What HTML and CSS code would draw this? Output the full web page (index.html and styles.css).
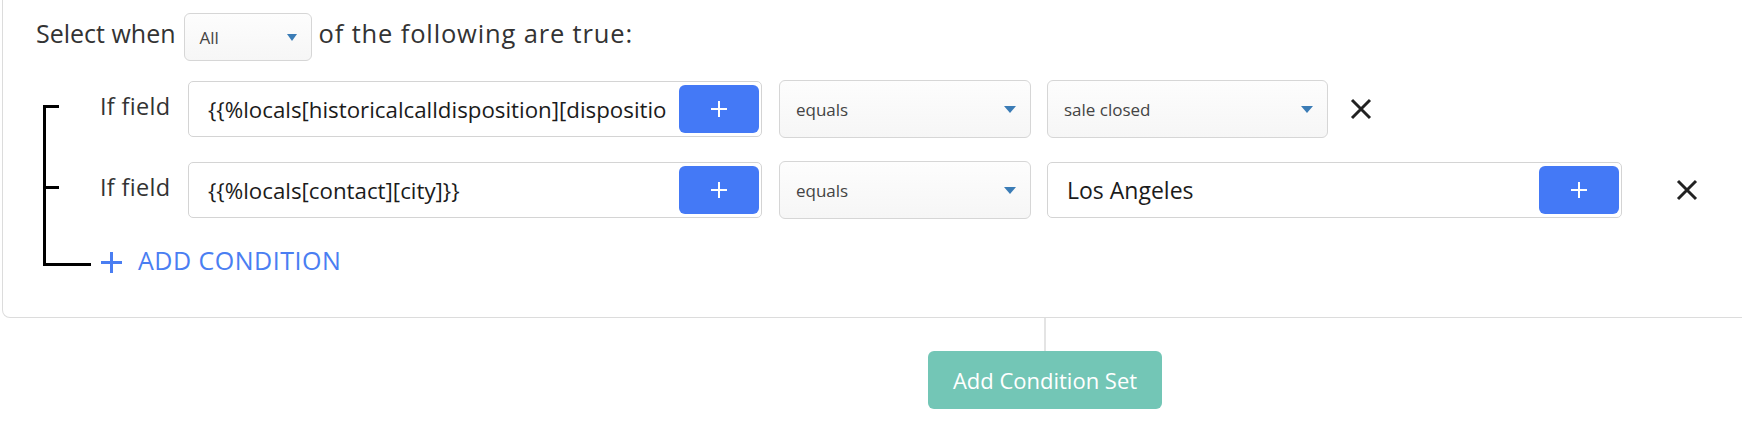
FILE: index.html
```html
<!DOCTYPE html>
<html lang="en">
<head>
<meta charset="utf-8">
<title>Condition Set</title>
<link rel="stylesheet" href="styles.css">
</head>
<body>
<div class="page">
  <section class="card">
    <div class="when">
      <span class="when-text when-lead">Select when</span>
      <div class="select select-sm"><span>All</span><i class="caret caret-sm"></i></div>
      <span class="when-text when-tail">of the following are true:</span>
    </div>

    <div class="tree">
      <div class="cond">
        <span class="cond-label">If field</span>
        <div class="field field-main">
          <span class="field-text">{{%locals[historicalcalldisposition][dispositio</span>
          <button class="add-btn" type="button">
            <svg width="18" height="18" viewBox="0 0 18 18"><path d="M9 1V17M1 9H17" stroke="#fff" stroke-width="2" fill="none"/></svg>
          </button>
        </div>
        <div class="select select-op"><span>equals</span><i class="caret"></i></div>
        <div class="select select-val"><span>sale closed</span><i class="caret"></i></div>
        <button class="remove" type="button">
          <svg width="22" height="22" viewBox="0 0 22 22"><path d="M2 2L20 20M20 2L2 20" stroke="#222" stroke-width="3" fill="none"/></svg>
        </button>
      </div>

      <div class="cond">
        <span class="cond-label">If field</span>
        <div class="field field-main">
          <span class="field-text">{{%locals[contact][city]}}</span>
          <button class="add-btn" type="button">
            <svg width="18" height="18" viewBox="0 0 18 18"><path d="M9 1V17M1 9H17" stroke="#fff" stroke-width="2" fill="none"/></svg>
          </button>
        </div>
        <div class="select select-op"><span>equals</span><i class="caret"></i></div>
        <div class="field field-val">
          <span class="field-text field-text-lg">Los Angeles</span>
          <button class="add-btn" type="button">
            <svg width="18" height="18" viewBox="0 0 18 18"><path d="M9 1V17M1 9H17" stroke="#fff" stroke-width="2" fill="none"/></svg>
          </button>
        </div>
        <button class="remove remove-far" type="button">
          <svg width="22" height="22" viewBox="0 0 22 22"><path d="M2 2L20 20M20 2L2 20" stroke="#222" stroke-width="3" fill="none"/></svg>
        </button>
      </div>

      <div class="add-cond">
        <svg class="add-cond-icon" width="23" height="23" viewBox="0 0 23 23"><path d="M11.5 1V22M1 11.5H22" stroke="#4a7ef2" stroke-width="3" fill="none"/></svg>
        <span class="add-cond-text">ADD CONDITION</span>
      </div>
    </div>
  </section>

  <div class="footer">
    <span class="stem"></span>
    <button class="set-btn" type="button">Add Condition Set</button>
  </div>
</div>
</body>
</html>
```

FILE: styles.css
```css
* {
  box-sizing: border-box;
}

html,
body {
  margin: 0;
  padding: 0;
  background: #fff;
}

body {
  font-family: "Open Sans", "Noto Sans", sans-serif;
  color: #333;
  overflow: hidden;
}

.page {
  width: 1742px;
}

.card {
  margin-left: 2px;
  width: 1760px;
  border: 1px solid #dcdcdc;
  border-top: 0;
  border-radius: 0 0 8px 8px;
  padding: 13px 0 37px 33px;
}

.when {
  display: flex;
  align-items: center;
  gap: 7px;
  height: 48px;
  color: #333;
}

.when-text {
  margin-bottom: 8px;
}

.when-lead {
  font-size: 25px;
}

.when-tail {
  font-size: 25.5px;
  letter-spacing: 0.85px;
}

.select {
  display: flex;
  align-items: center;
  justify-content: space-between;
  border: 1px solid #d6d6d6;
  border-radius: 6px;
  background: linear-gradient(#fdfdfd, #f6f6f6);
  padding: 0 14px 0 16px;
  font-size: 17px;
  letter-spacing: 0;
  color: #444;
  flex: none;
}

.select-sm {
  width: 128px;
  height: 48px;
  padding-left: 15px;
  margin-left: 1px;
}

.caret {
  width: 0;
  height: 0;
  border-left: 6px solid transparent;
  border-right: 6px solid transparent;
  border-top: 7px solid #3b7cb6;
}

.caret-sm {
  border-left-width: 5.5px;
  border-right-width: 5.5px;
  border-top-width: 7px;
}

.tree {
  position: relative;
  margin: 19px 0 0 7px;
  padding-left: 57px;
}

.tree::before {
  content: "";
  position: absolute;
  left: 0;
  top: 25px;
  bottom: 14px;
  width: 3px;
  background: #000;
}

.cond {
  position: relative;
  display: flex;
  align-items: center;
  height: 58px;
}

.cond + .cond {
  margin-top: 23px;
}

.cond::before {
  content: "";
  position: absolute;
  left: -57px;
  top: 25px;
  width: 16px;
  height: 3px;
  background: #000;
}

.cond-label {
  width: 88px;
  flex: none;
  font-size: 23.5px;
  letter-spacing: 0.3px;
  color: #333;
  margin-bottom: 6px;
}

.field {
  display: flex;
  align-items: center;
  height: 56px;
  border: 1px solid #d4d4d4;
  border-radius: 5px;
  padding: 3px 2px 3px 0;
  background: #fff;
  flex: none;
}

.field-main {
  width: 574px;
}

.field-val {
  width: 575px;
  margin-left: 16px;
}

.field-text {
  flex: 1;
  min-width: 0;
  overflow: hidden;
  white-space: nowrap;
  padding-left: 19px;
  font-size: 22.3px;
  color: #1b1b1b;
}

.field-text-lg {
  font-size: 23px;
}

.add-btn {
  flex: none;
  width: 80px;
  height: 48px;
  margin-left: 10px;
  padding: 0;
  border: 0;
  border-radius: 6px;
  background: #4479f6;
  display: flex;
  align-items: center;
  justify-content: center;
}

.select-op {
  width: 252px;
  height: 58px;
  margin-left: 17px;
}

.select-val {
  width: 281px;
  height: 58px;
  margin-left: 16px;
}

.remove {
  flex: none;
  width: 22px;
  height: 22px;
  margin-left: 22px;
  padding: 0;
  border: 0;
  background: none;
  display: flex;
}

.remove-far {
  margin-left: 54px;
}

.add-cond {
  position: relative;
  display: flex;
  align-items: center;
  gap: 15px;
  height: 30px;
  margin-top: 31px;
  font-size: 25px;
  letter-spacing: 0.5px;
  color: #4a7ef2;
}

.add-cond-icon {
  margin-bottom: 6px;
}

.add-cond-text {
  margin-bottom: 10px;
}

.add-cond::before {
  content: "";
  position: absolute;
  left: -57px;
  top: 13px;
  width: 48px;
  height: 3px;
  background: #000;
}

.footer {
  display: flex;
  flex-direction: column;
  align-items: center;
  width: 234px;
  margin-left: 928px;
}

.stem {
  width: 2px;
  height: 33px;
  background: #e4e4e4;
}

.set-btn {
  width: 234px;
  height: 58px;
  border: 0;
  border-radius: 6px;
  background: #73c6b6;
  color: #fff;
  font-family: inherit;
  font-size: 22px;
  padding: 0;
}
```
